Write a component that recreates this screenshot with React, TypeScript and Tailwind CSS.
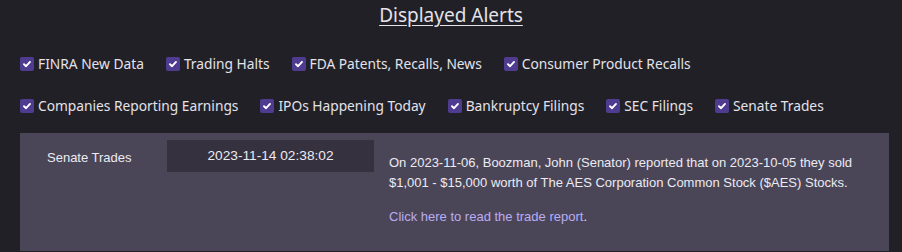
import React from "react";

const row1 = ["FINRA New Data", "Trading Halts", "FDA Patents, Recalls, News", "Consumer Product Recalls"];
const row2 = ["Companies Reporting Earnings", "IPOs Happening Today", "Bankruptcy Filings", "SEC Filings", "Senate Trades"];

function Check({ label }: { label: string }) {
  return (
    <label className="flex items-center gap-[4px]">
      <span className="flex h-[14px] w-[14px] items-center justify-center rounded-[2px] bg-[#4f3c91]">
        <svg width="10" height="10" viewBox="0 0 10 10" fill="none">
          <path d="M2 5.2 L4.1 7.2 L8 2.9" stroke="#ffffff" strokeWidth="1.9" strokeLinecap="round" strokeLinejoin="round" />
        </svg>
      </span>
      <span>{label}</span>
    </label>
  );
}

export default function App() {
  return (
    <div className="h-[252px] w-[902px] overflow-hidden bg-[#212026] text-[#e4e2ea]" style={{ fontFamily: '"Noto Sans", sans-serif' }}>
      <div className="pt-[3px] text-center">
        <span className="text-[19px] leading-[25px] underline underline-offset-[3px]">Displayed Alerts</span>
      </div>
      <div className="flex gap-[22px] px-[20px] pt-[27px] text-[13.75px] leading-[18px]">
        {row1.map((l) => (
          <Check key={l} label={l} />
        ))}
      </div>
      <div className="flex gap-[22px] px-[20px] pt-[24px] text-[13.75px] leading-[18px]">
        {row2.map((l) => (
          <Check key={l} label={l} />
        ))}
      </div>
      <div
        className="ml-[20px] mt-[18px] flex h-[118px] w-[869px] bg-[#4a4658] text-[13px] text-[#eceaf2]"
        style={{ fontFamily: '"Liberation Sans", Arial, sans-serif' }}
      >
        <div className="w-[147px] pl-[27px] pt-[17px] leading-[15px]">Senate Trades</div>
        <div className="mt-[7px] flex h-[32px] w-[207px] items-center justify-center bg-[#35313f] text-[13.7px]">2023-11-14 02:38:02</div>
        <div className="pl-[15px] pt-[20px] leading-[20px]">
          <p>On 2023-11-06, Boozman, John (Senator) reported that on 2023-10-05 they sold</p>
          <p>$1,001 - $15,000 worth of The AES Corporation Common Stock ($AES) Stocks.</p>
          <p className="mt-[14px] text-[#b9acf4]">
            Click here to read the trade report<span className="text-[#eceaf2]">.</span>
          </p>
        </div>
      </div>
    </div>
  );
}
